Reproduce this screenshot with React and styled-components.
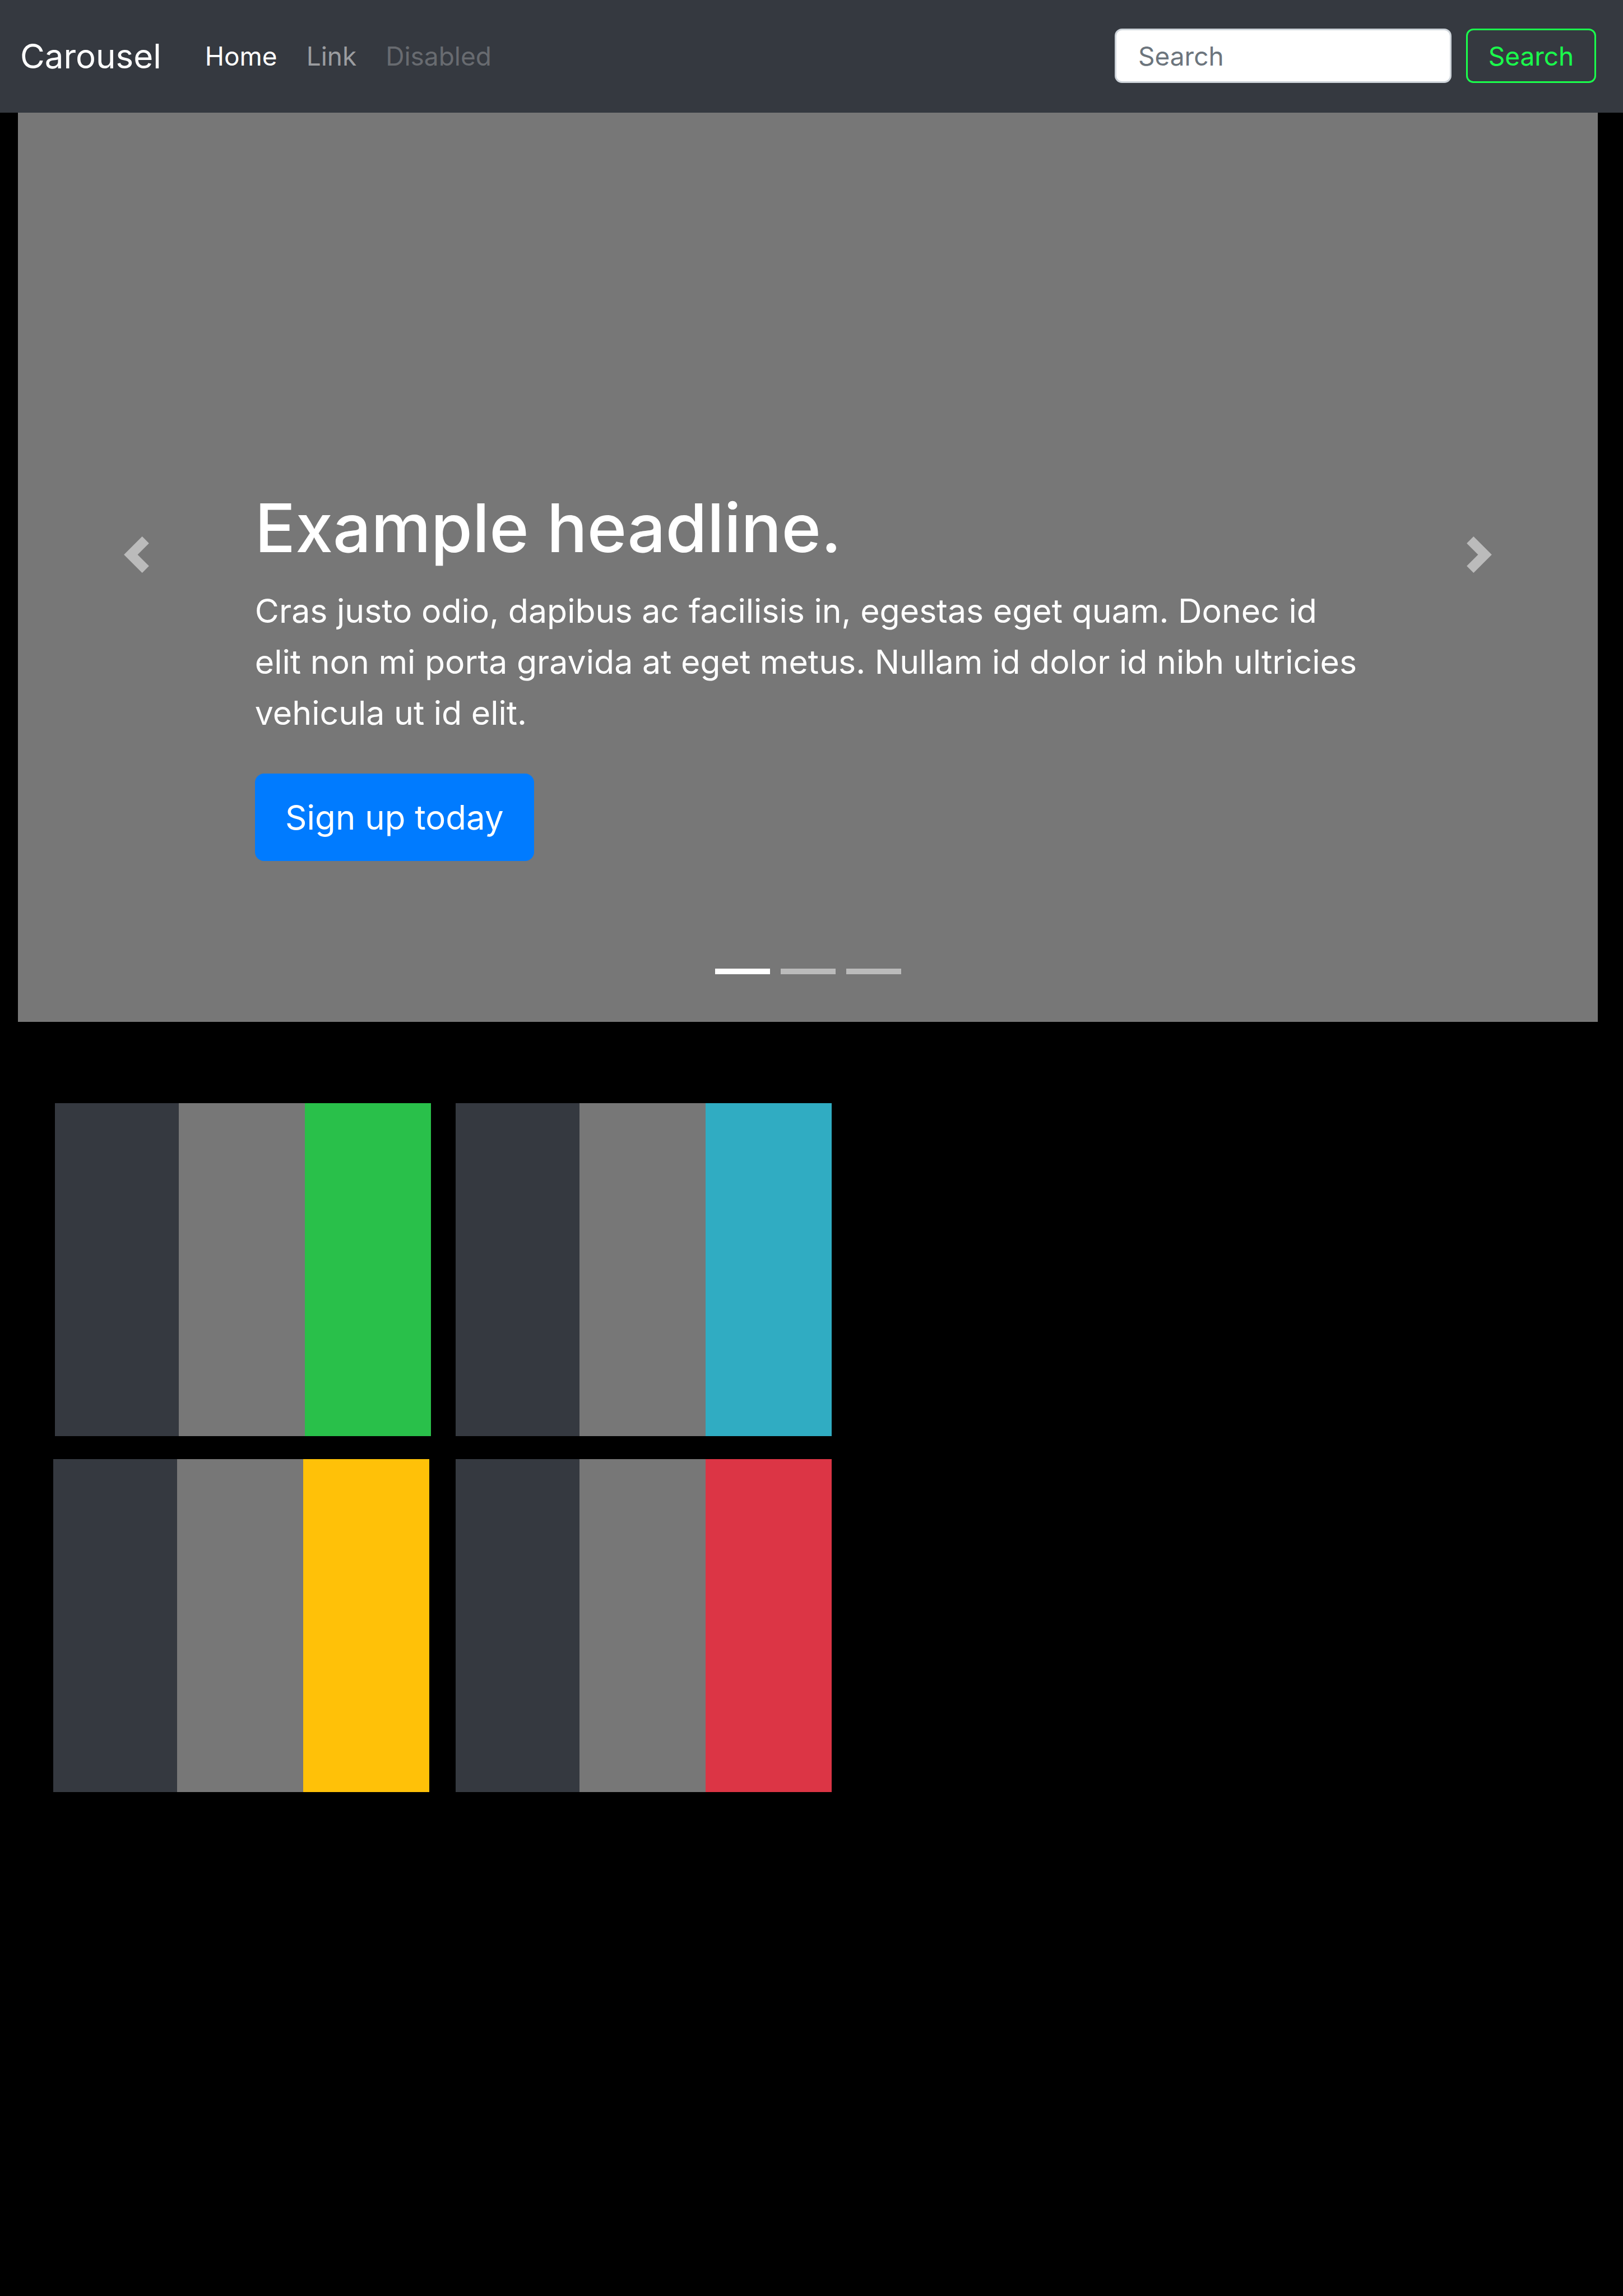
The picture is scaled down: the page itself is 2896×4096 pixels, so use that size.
import React, { useState } from "react";
import styled, { createGlobalStyle } from "styled-components";

const GlobalStyle = createGlobalStyle`
  *, *::before, *::after { box-sizing: border-box; }
  html { background: #000; }
  body {
    margin: 0;
    background: #000;
    color: #fff;
    font-family: Inter, "Liberation Sans", sans-serif;
    font-size: 46px;
    line-height: 76px;
  }
`;

const Navbar = styled.header`
  position: fixed;
  top: 0;
  left: 0;
  right: 0;
  z-index: 10;
  display: flex;
  align-items: center;
  height: 201px;
  padding: 0 48px 2px 36px;
  background: #353940;
`;

const Brand = styled.a`
  margin-right: 52px;
  color: #fff;
  font-size: 60px;
  text-decoration: none;
`;

const NavList = styled.ul`
  display: flex;
  flex: 1;
  margin: 0;
  padding: 0;
  list-style: none;
`;

const NavLink = styled.a`
  display: block;
  padding: 0 26px;
  color: ${(p) => p.$color};
  text-decoration: none;
`;

const SearchForm = styled.form`
  display: flex;
  gap: 26px;
`;

const SearchInput = styled.input`
  width: 601px;
  height: 97px;
  padding: 0 39px;
  border: 3px solid #ced4da;
  border-radius: 13px;
  background: #fff;
  color: #495057;
  font: inherit;
  &::placeholder { color: #6c757d; opacity: 1; }
`;

const SearchButton = styled.button`
  width: 232px;
  height: 97px;
  padding: 0;
  border: 3px solid #1aff4c;
  border-radius: 13px;
  background: transparent;
  color: #1aff4c;
  font: inherit;
`;

const Main = styled.main`
  padding-top: 155px;
`;

const Carousel = styled.section`
  position: relative;
  display: flex;
  align-items: flex-end;
  justify-content: center;
  height: 1668px;
  margin: 0 45px 0 32px;
  padding-bottom: 287px;
  background: #777;
`;

const Caption = styled.div`
  width: 70%;
`;

const Headline = styled.h1`
  margin: 0 0 24px;
  font-size: 120px;
  font-weight: 500;
  line-height: 156px;
`;

const Lead = styled.p`
  margin: 0 0 63px;
  font-size: 59px;
  line-height: 91px;
  white-space: nowrap;
`;

const SignUp = styled.a`
  display: flex;
  align-items: center;
  justify-content: center;
  width: 498px;
  height: 156px;
  border-radius: 16px;
  background: #007bff;
  color: #fff;
  font-size: 60px;
  text-decoration: none;
`;

const Control = styled.button`
  position: absolute;
  top: 0;
  bottom: 0;
  ${(p) => p.$side}: 0;
  display: flex;
  align-items: center;
  justify-content: center;
  width: 15%;
  padding: 0;
  border: 0;
  background: transparent;
  color: #fff;
  opacity: 0.5;
`;

const Indicators = styled.div`
  position: absolute;
  left: 0;
  right: 0;
  bottom: 85px;
  display: flex;
  justify-content: center;
  gap: 19px;
`;

const Indicator = styled.button`
  width: 98px;
  height: 10px;
  padding: 0;
  border: 0;
  background: #fff;
  opacity: ${(p) => (p.$active ? 1 : 0.5)};
`;

const Palettes = styled.section`
  display: grid;
  gap: 41px;
  padding: 145px 95px 0;
`;

const PaletteRow = styled.div`
  display: flex;
  gap: ${(p) => p.$gap}px;
  padding-left: ${(p) => p.$inset}px;
`;

const Palette = styled.div`
  display: grid;
  grid-template-columns: 221px 225px 225px;
  height: 594px;
`;

const Swatch = styled.div`
  background: ${(p) => p.$color};
`;

const links = [
  { label: "Home", color: "#fff" },
  { label: "Link", color: "#9b9da0" },
  { label: "Disabled", color: "#686b70" },
];

const rows = [
  { inset: 3, gap: 44, accents: ["#29c04a", "#30acc2"] },
  { inset: 0, gap: 47, accents: ["#ffc108", "#dc3545"] },
];

const Chevron = ({ d }) => (
  <svg width="65" height="65" viewBox="0 0 8 8" fill="currentColor" aria-hidden="true">
    <path d={d} />
  </svg>
);

export default function App() {
  const [slide, setSlide] = useState(0);
  return (
    <>
      <GlobalStyle />
      <Navbar>
        <Brand href="#">Carousel</Brand>
        <NavList>
          {links.map((l) => (
            <li key={l.label}>
              <NavLink href="#" $color={l.color}>{l.label}</NavLink>
            </li>
          ))}
        </NavList>
        <SearchForm onSubmit={(e) => e.preventDefault()}>
          <SearchInput type="text" placeholder="Search" aria-label="Search" />
          <SearchButton type="submit">Search</SearchButton>
        </SearchForm>
      </Navbar>
      <Main>
        <Carousel>
          <Caption>
            <Headline>Example headline.</Headline>
            <Lead>
              Cras justo odio, dapibus ac facilisis in, egestas eget quam. Donec id<br />
              elit non mi porta gravida at eget metus. Nullam id dolor id nibh ultricies<br />
              vehicula ut id elit.
            </Lead>
            <SignUp href="#">Sign up today</SignUp>
          </Caption>
          <Control type="button" $side="left" aria-label="Previous" onClick={() => setSlide((slide + 2) % 3)}>
            <Chevron d="M5.25 0l-4 4 4 4 1.5-1.5-2.5-2.5 2.5-2.5-1.5-1.5z" />
          </Control>
          <Control type="button" $side="right" aria-label="Next" onClick={() => setSlide((slide + 1) % 3)}>
            <Chevron d="M2.75 0l-1.5 1.5 2.5 2.5-2.5 2.5 1.5 1.5 4-4-4-4z" />
          </Control>
          <Indicators>
            {[0, 1, 2].map((i) => (
              <Indicator key={i} type="button" $active={i === slide} aria-label={`Slide ${i + 1}`} onClick={() => setSlide(i)} />
            ))}
          </Indicators>
        </Carousel>
        <Palettes>
          {rows.map((row) => (
            <PaletteRow key={row.inset} $inset={row.inset} $gap={row.gap}>
              {row.accents.map((accent) => (
                <Palette key={accent}>
                  <Swatch $color="#353940" />
                  <Swatch $color="#777" />
                  <Swatch $color={accent} />
                </Palette>
              ))}
            </PaletteRow>
          ))}
        </Palettes>
      </Main>
    </>
  );
}
